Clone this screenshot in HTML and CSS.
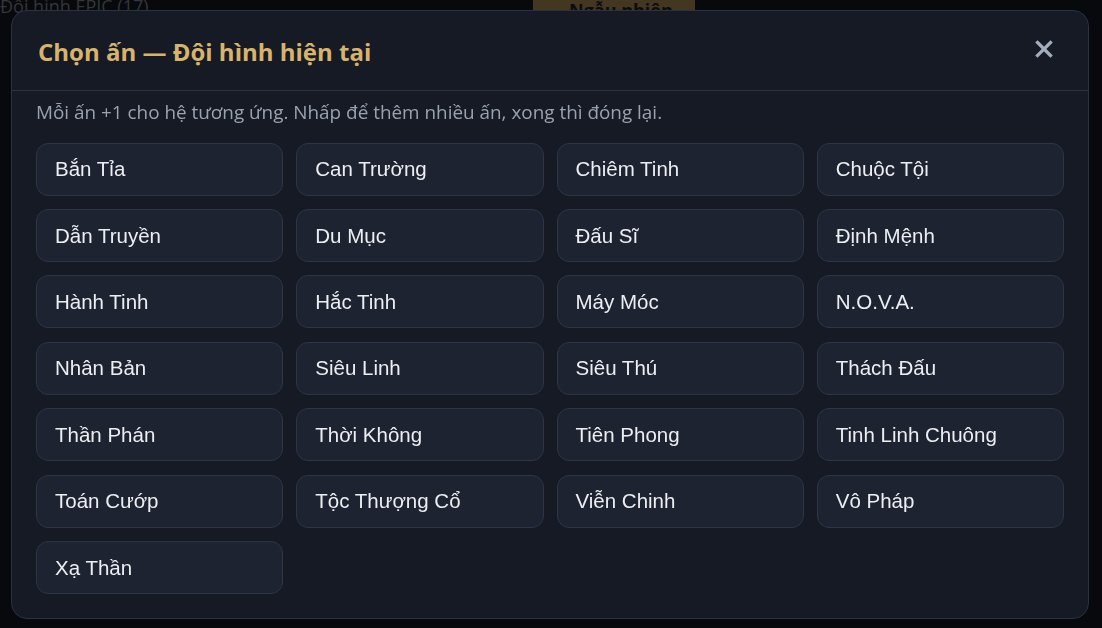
FILE: index.html
```html
<!DOCTYPE html>
<html lang="vi">
<head>
<meta charset="utf-8">
<title>Chọn ấn</title>
<link rel="stylesheet" href="styles.css">
</head>
<body>
<div class="page">
  <div class="topbar">
    <span class="tb-title">Đội hình EPIC (17)</span>
    <span class="tb-btn">Ngẫu nhiên</span>
  </div>
</div>
<div class="backdrop">
  <div class="modal">
    <div class="modal-head">
      <h2 class="modal-title">Chọn ấn — Đội hình hiện tại</h2>
      <button class="close" aria-label="Đóng">
        <svg width="18" height="18" viewBox="0 0 18 18"><path d="M2.5 2.5L15.5 15.5M15.5 2.5L2.5 15.5" stroke="#a3adbd" stroke-width="3.2" stroke-linecap="square"/></svg>
      </button>
    </div>
    <div class="modal-body">
      <p class="hint">Mỗi ấn +1 cho hệ tương ứng. Nhấp để thêm nhiều ấn, xong thì đóng lại.</p>
      <div class="grid">
        <button class="trait">Bắn Tỉa</button>
        <button class="trait">Can Trường</button>
        <button class="trait">Chiêm Tinh</button>
        <button class="trait">Chuộc Tội</button>
        <button class="trait">Dẫn Truyền</button>
        <button class="trait">Du Mục</button>
        <button class="trait">Đấu Sĩ</button>
        <button class="trait">Định Mệnh</button>
        <button class="trait">Hành Tinh</button>
        <button class="trait">Hắc Tinh</button>
        <button class="trait">Máy Móc</button>
        <button class="trait">N.O.V.A.</button>
        <button class="trait">Nhân Bản</button>
        <button class="trait">Siêu Linh</button>
        <button class="trait">Siêu Thú</button>
        <button class="trait">Thách Đấu</button>
        <button class="trait">Thần Phán</button>
        <button class="trait">Thời Không</button>
        <button class="trait">Tiên Phong</button>
        <button class="trait">Tinh Linh Chuông</button>
        <button class="trait">Toán Cướp</button>
        <button class="trait">Tộc Thượng Cổ</button>
        <button class="trait">Viễn Chinh</button>
        <button class="trait">Vô Pháp</button>
        <button class="trait">Xạ Thần</button>
      </div>
    </div>
  </div>
</div>
</body>
</html>
```

FILE: styles.css
```css
* { box-sizing: border-box; }
html, body { margin: 0; padding: 0; }
body {
  width: 1102px;
  height: 628px;
  overflow: hidden;
  background: #08090d;
  font-family: "Open Sans", "Noto Sans", sans-serif;
}
.page {
  height: 100%;
}
.topbar {
  display: flex;
  align-items: flex-start;
  height: 30px;
}
.tb-title {
  margin-top: -6px;
  color: #33363c;
  font-size: 18px;
  width: 533px;
}
.tb-btn {
  margin-top: -10px;
  background: #433722;
  color: #0c0c0c;
  font-weight: 700;
  font-size: 18px;
  width: 162px;
  height: 30px;
  padding: 8px 0 0 36px;
}
.backdrop {
  position: fixed;
  inset: 0;
  padding: 10px 13px 9px 11px;
}
.modal {
  height: 609px;
  width: 1078px;
  background: #151a24;
  border: 1px solid #283242;
  border-radius: 16px;
  display: flex;
  flex-direction: column;
}
.modal-head {
  height: 81px;
  border-bottom: 1px solid #283444;
  display: flex;
  align-items: center;
  justify-content: space-between;
  padding: 4px 35px 0 26px;
}
.modal-title {
  margin: 0;
  color: #d8b36c;
  font-size: 24px;
  font-weight: 700;
  letter-spacing: 0;
  padding-bottom: 2px;
}
.close {
  background: none;
  border: 0;
  padding: 0;
  width: 18px;
  height: 18px;
  display: block;
  margin-bottom: 6px;
  cursor: pointer;
}
.close svg { display: block; }
.modal-body {
  padding: 9px 24px 24px 24px;
}
.hint {
  margin: 0 0 19px 0;
  color: #9aa2b0;
  font-size: 18.9px;
  line-height: 24px;
}
.grid {
  display: grid;
  grid-template-columns: repeat(4, 1fr);
  column-gap: 13px;
  row-gap: 13.4px;
}
.trait {
  height: 53px;
  background: #1d2331;
  border: 1px solid #2c3646;
  border-radius: 12px;
  color: #eceef2;
  font-family: "Liberation Sans", Arial, sans-serif;
  font-size: 20.5px;
  text-align: left;
  padding: 0 18px;
  cursor: pointer;
}
```
